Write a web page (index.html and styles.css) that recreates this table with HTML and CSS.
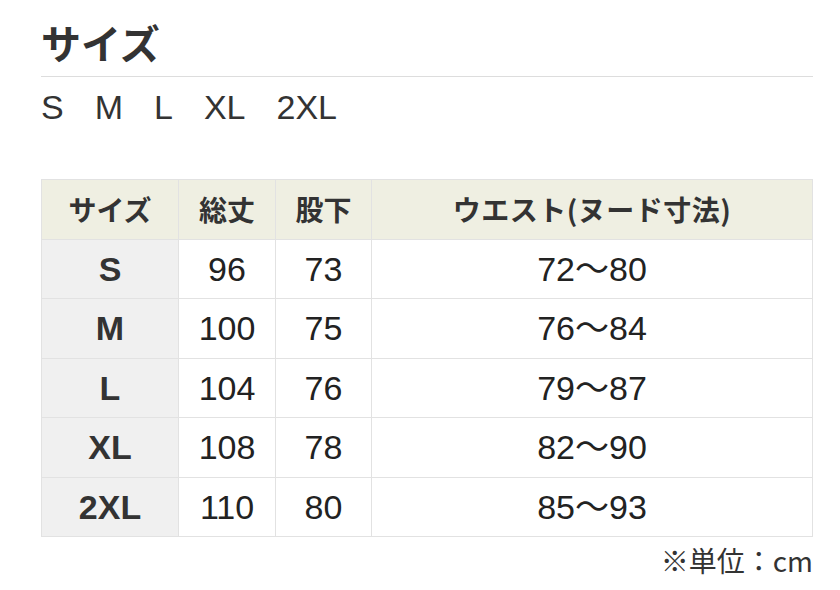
FILE: index.html
```html
<!DOCTYPE html>
<html lang="ja">
<head>
<meta charset="utf-8">
<link rel="stylesheet" href="styles.css">
</head>
<body>
<div class="page">
  <h1 class="title">サイズ</h1>
  <div class="sizes">
    <span>S</span><span>M</span><span>L</span><span>XL</span><span>2XL</span>
  </div>
  <table class="chart">
    <colgroup>
      <col class="c1"><col class="c2"><col class="c3"><col class="c4">
    </colgroup>
    <thead>
      <tr><th>サイズ</th><th>総丈</th><th>股下</th><th class="wide">ウエスト(ヌード寸法)</th></tr>
    </thead>
    <tbody>
      <tr><th>S</th><td>96</td><td>73</td><td>72～80</td></tr>
      <tr><th>M</th><td>100</td><td>75</td><td>76～84</td></tr>
      <tr><th>L</th><td>104</td><td>76</td><td>79～87</td></tr>
      <tr><th>XL</th><td>108</td><td>78</td><td>82～90</td></tr>
      <tr><th>2XL</th><td>110</td><td>80</td><td>85～93</td></tr>
    </tbody>
  </table>
  <p class="note">※単位：cm</p>
</div>
</body>
</html>
```

FILE: styles.css
```css
html, body {
  margin: 0;
  padding: 0;
  background: #fff;
}
body {
  font-family: "Liberation Sans", "Noto Sans CJK JP", sans-serif;
  color: #333;
}
.page {
  width: 772px;
  margin-left: 41px;
}
.title {
  margin: 0;
  padding-top: 18px;
  padding-bottom: 10px;
  font-family: "Noto Sans CJK JP", sans-serif;
  font-size: 40px;
  line-height: 48px;
  font-weight: 700;
  color: #333;
  border-bottom: 1px solid #ddd;
}
.sizes {
  display: flex;
  gap: 31px;
  margin-top: 10px;
  font-size: 34px;
  line-height: 40px;
  color: #333;
}
.chart {
  margin-top: 52px;
  width: 772px;
  border-collapse: collapse;
  table-layout: fixed;
  border: 1px solid #e2e2e2;
}
.c1 { width: 137px; }
.c2 { width: 97px; }
.c3 { width: 96px; }
.c4 { width: auto; }
.chart th, .chart td {
  border: 1px solid #e2e2e2;
  height: 58.5px;
  padding: 0;
  text-align: center;
  vertical-align: middle;
  line-height: 40px;
}
.chart thead th {
  background: #efefe2;
  font-family: "Noto Sans CJK JP", sans-serif;
  font-size: 28px;
  font-weight: 700;
  color: #333;
}
.chart thead th.wide {
  letter-spacing: 0.5px;
}
.chart tbody th {
  background: #f0f0f0;
  font-size: 34px;
  font-weight: 700;
  color: #333;
}
.chart tbody td {
  font-size: 34px;
  color: #222;
}
.note {
  margin: 3px 0 0;
  text-align: right;
  font-family: "Noto Sans CJK JP", sans-serif;
  font-size: 28px;
  line-height: 40px;
  color: #333;
}
```
